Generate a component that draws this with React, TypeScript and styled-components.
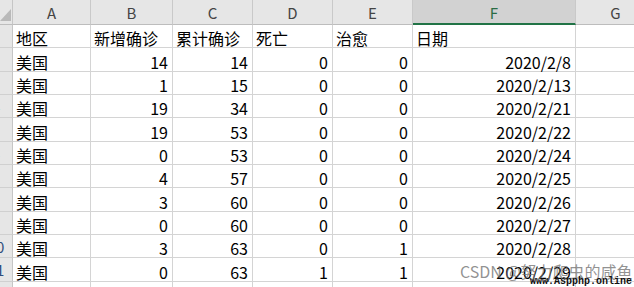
import React from "react";
import styled, { createGlobalStyle } from "styled-components";

const Global = createGlobalStyle`
  html, body { margin: 0; padding: 0; background: #fff; }
  body { width: 634px; height: 287px; overflow: hidden; }
  #root { width: 634px; height: 287px; }
`;

const FONT = `"Noto Sans CJK SC", "Liberation Sans", sans-serif`;

const Sheet = styled.div`
  position: relative;
  width: 634px;
  height: 287px;
  overflow: hidden;
  display: flex;
  flex-direction: column;
  font-family: ${FONT};
  background: #fff;
`;

const Row = styled.div<{ $h: number }>`
  display: flex;
  flex: 0 0 ${(p) => p.$h}px;
  height: ${(p) => p.$h}px;
`;

const HeadRow = styled(Row)`
  background: #e6e6e6;
`;

const Corner = styled.div`
  flex: 0 0 13px;
  box-sizing: border-box;
  border-right: 1px solid #c6c6c6;
  border-bottom: 1px solid #bdbdbd;
  display: flex;
  align-items: flex-end;
  justify-content: flex-end;
`;

const ColHead = styled.div<{ $w: number; $sel?: boolean }>`
  flex: 0 0 ${(p) => p.$w}px;
  box-sizing: border-box;
  border-right: 1px solid #c9c9c9;
  border-bottom: ${(p) => (p.$sel ? "2px solid #217346" : "1px solid #bdbdbd")};
  background: ${(p) => (p.$sel ? "#d2d2d2" : "#e6e6e6")};
  color: ${(p) => (p.$sel ? "#2a6c45" : "#444")};
  font-size: 15px;
  display: flex;
  align-items: center;
  justify-content: center;
  padding-top: ${(p) => (p.$sel ? "1px" : "0")};
`;

const RowHead = styled.div`
  flex: 0 0 13px;
  box-sizing: border-box;
  border-right: 1px solid #c6c6c6;
  border-bottom: 1px solid #d0d0d0;
  background: #e6e6e6;
  overflow: hidden;
  position: relative;
`;

const RowNum = styled.div`
  width: 32px;
  margin-left: -20px;
  height: 100%;
  display: flex;
  align-items: center;
  justify-content: center;
  font-size: 15px;
  color: #2f4d7c;
`;

const Cell = styled.div<{ $w: number; $right?: boolean }>`
  flex: 0 0 ${(p) => p.$w}px;
  box-sizing: border-box;
  border-right: 1px solid #d4d4d4;
  border-bottom: 1px solid #d4d4d4;
  display: flex;
  align-items: flex-end;
  justify-content: ${(p) => (p.$right ? "flex-end" : "flex-start")};
  padding: 0 4px 0 3px;
  font-size: 16px;
  line-height: 16px;
  color: #000;
  white-space: nowrap;
  overflow: visible;
`;

const CellText = styled.span`
  display: block;
  padding-bottom: 1px;
`;

const Watermark = styled.div`
  position: absolute;
  left: 460px;
  top: 259px;
  font-family: ${FONT};
  font-size: 16px;
  color: rgba(110, 110, 110, 0.75);
  white-space: nowrap;
  pointer-events: none;
`;

const SiteMark = styled.div`
  position: absolute;
  left: 530px;
  top: 276px;
  font-family: "Liberation Mono", "DejaVu Sans Mono", monospace;
  font-size: 10px;
  font-weight: bold;
  color: #111;
  white-space: nowrap;
`;

const cols = [
  { key: "A", w: 78 },
  { key: "B", w: 82 },
  { key: "C", w: 80 },
  { key: "D", w: 80 },
  { key: "E", w: 80 },
  { key: "F", w: 163 },
  { key: "G", w: 80 },
];

const heights = [23, 24, 23, 23, 24, 23, 23, 24, 23, 23, 24, 23];

type R = [string, string, string, string, string, string];
const data: R[] = [
  ["地区", "新增确诊", "累计确诊", "死亡", "治愈", "日期"],
  ["美国", "14", "14", "0", "0", "2020/2/8"],
  ["美国", "1", "15", "0", "0", "2020/2/13"],
  ["美国", "19", "34", "0", "0", "2020/2/21"],
  ["美国", "19", "53", "0", "0", "2020/2/22"],
  ["美国", "0", "53", "0", "0", "2020/2/24"],
  ["美国", "4", "57", "0", "0", "2020/2/25"],
  ["美国", "3", "60", "0", "0", "2020/2/26"],
  ["美国", "0", "60", "0", "0", "2020/2/27"],
  ["美国", "3", "63", "0", "1", "2020/2/28"],
  ["美国", "0", "63", "1", "1", "2020/2/29"],
  ["美国", "20", "83", "0", "1", "2020/3/1"],
];

export default function App() {
  return (
    <>
      <Global />
      <Sheet>
        <HeadRow $h={25}>
          <Corner>
            <svg width="12" height="24" viewBox="0 0 12 24">
              <polygon points="11,9 11,21 0,21" fill="#b9b9b9" />
            </svg>
          </Corner>
          {cols.map((c) => (
            <ColHead key={c.key} $w={c.w} $sel={c.key === "F"}>
              {c.key}
            </ColHead>
          ))}
        </HeadRow>
        {data.map((r, i) => (
          <Row key={i} $h={heights[i]}>
            <RowHead>
              <RowNum>{i + 1}</RowNum>
            </RowHead>
            {cols.map((c, j) => {
              const v = j < 6 ? r[j] : "";
              const right = i > 0 && j > 0 && j < 6;
              return (
                <Cell key={c.key} $w={c.w} $right={right}>
                  <CellText>{v}</CellText>
                </Cell>
              );
            })}
          </Row>
        ))}
        <Watermark>CSDN @努力爬虫的咸鱼</Watermark>
        <SiteMark>www.Aspphp.online</SiteMark>
      </Sheet>
    </>
  );
}
